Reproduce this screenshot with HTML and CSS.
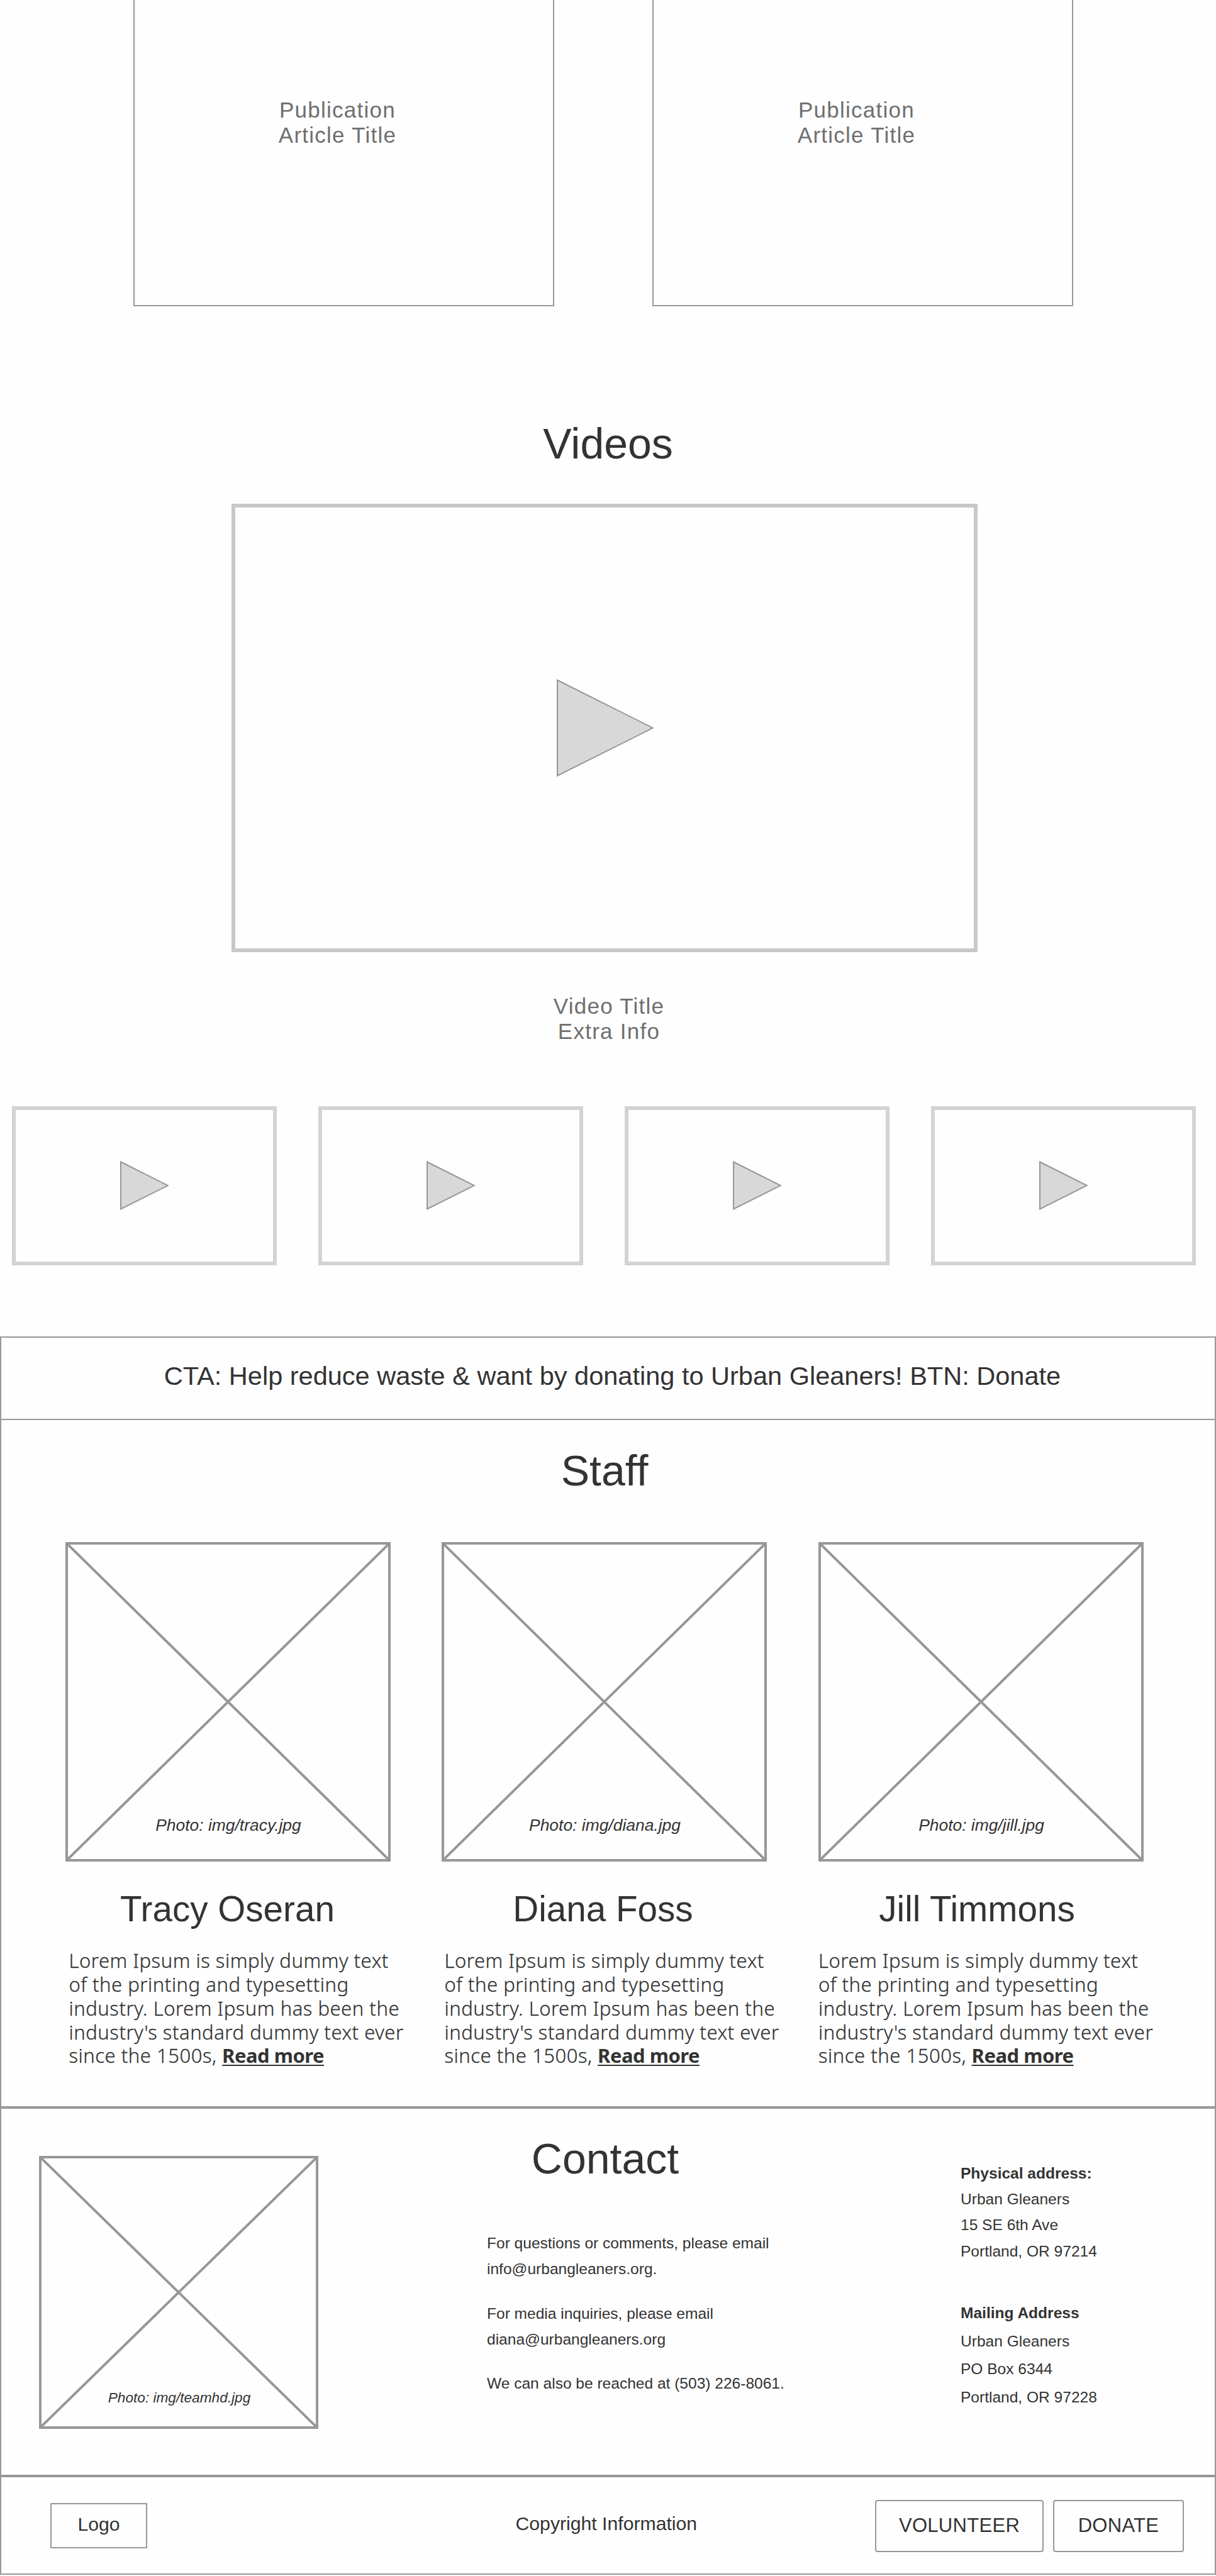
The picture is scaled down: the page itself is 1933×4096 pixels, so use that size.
FILE: index.html
```html
<!DOCTYPE html>
<html lang="en">
<head>
<meta charset="utf-8">
<title>Urban Gleaners</title>
<link rel="stylesheet" href="styles.css">
</head>
<body>
<section class="articles">
  <article class="article">Publication<br>Article Title</article>
  <article class="article">Publication<br>Article Title</article>
</section>

<section class="videos">
  <h2 class="heading">Videos</h2>
  <div class="player"><svg class="play" viewBox="0 0 155 155"><path d="M2 1.500 L154 77.500 L2 153.500 Z"/></svg></div>
  <p class="video-caption">Video Title<br>Extra Info</p>
  <div class="thumbs">
    <div class="thumb"><svg class="play-small" viewBox="0 0 78 78"><path d="M1 1.500 L76 39 L1 76.500 Z"/></svg></div>
    <div class="thumb"><svg class="play-small" viewBox="0 0 78 78"><path d="M1 1.500 L76 39 L1 76.500 Z"/></svg></div>
    <div class="thumb"><svg class="play-small" viewBox="0 0 78 78"><path d="M1 1.500 L76 39 L1 76.500 Z"/></svg></div>
    <div class="thumb"><svg class="play-small" viewBox="0 0 78 78"><path d="M1 1.500 L76 39 L1 76.500 Z"/></svg></div>
  </div>
</section>

<main class="frame">
  <section class="cta">CTA: Help reduce waste &amp; want by donating to Urban Gleaners! BTN: Donate</section>

  <section class="staff">
    <h2 class="heading staff-heading">Staff</h2>
    <div class="people">
      <article class="person tracy">
        <div class="photo"><svg class="cross" viewBox="0 0 100 100" preserveAspectRatio="none"><path d="M0 0 L100 100 M100 0 L0 100"/></svg><span class="photo-label">Photo: img/tracy.jpg</span></div>
        <h3 class="name">Tracy Oseran</h3>
        <p class="bio">Lorem Ipsum is simply dummy text<br>of the printing and typesetting<br>industry. Lorem Ipsum has been the<br>industry's standard dummy text ever<br>since the 1500s, <a class="more">Read more</a></p>
      </article>
      <article class="person diana">
        <div class="photo"><svg class="cross" viewBox="0 0 100 100" preserveAspectRatio="none"><path d="M0 0 L100 100 M100 0 L0 100"/></svg><span class="photo-label">Photo: img/diana.jpg</span></div>
        <h3 class="name">Diana Foss</h3>
        <p class="bio">Lorem Ipsum is simply dummy text<br>of the printing and typesetting<br>industry. Lorem Ipsum has been the<br>industry's standard dummy text ever<br>since the 1500s, <a class="more">Read more</a></p>
      </article>
      <article class="person jill">
        <div class="photo"><svg class="cross" viewBox="0 0 100 100" preserveAspectRatio="none"><path d="M0 0 L100 100 M100 0 L0 100"/></svg><span class="photo-label">Photo: img/jill.jpg</span></div>
        <h3 class="name">Jill Timmons</h3>
        <p class="bio">Lorem Ipsum is simply dummy text<br>of the printing and typesetting<br>industry. Lorem Ipsum has been the<br>industry's standard dummy text ever<br>since the 1500s, <a class="more">Read more</a></p>
      </article>
    </div>
  </section>

  <section class="contact">
    <div class="photo team"><svg class="cross" viewBox="0 0 100 100" preserveAspectRatio="none"><path d="M0 0 L100 100 M100 0 L0 100"/></svg><span class="photo-label">Photo: img/teamhd.jpg</span></div>
    <div class="contact-text">
      <h2 class="heading">Contact</h2>
      <p>For questions or comments, please email<br>info@urbangleaners.org.</p>
      <p>For media inquiries, please email<br>diana@urbangleaners.org</p>
      <p>We can also be reached at (503) 226-8061.</p>
    </div>
    <div class="addresses">
      <address class="physical"><b>Physical address:</b><br>Urban Gleaners<br>15 SE 6th Ave<br>Portland, OR 97214</address>
      <address class="mailing"><b>Mailing Address</b><br>Urban Gleaners<br>PO Box 6344<br>Portland, OR 97228</address>
    </div>
  </section>

  <footer class="footer">
    <div class="logo">Logo</div>
    <div class="copyright">Copyright Information</div>
    <div class="actions">
      <a class="button volunteer">VOLUNTEER</a>
      <a class="button donate">DONATE</a>
    </div>
  </footer>
</main>
</body>
</html>
```
FILE: styles.css
```css
* {
  box-sizing: border-box;
}

body {
  margin: 0;
  height: 4096px;
  overflow: hidden;
  background: #fefefe;
  color: #333;
  font-family: "Liberation Sans", Arial, sans-serif;
}

h2, h3, p {
  margin: 0;
  font-weight: normal;
}

.heading {
  font-size: 68px;
  line-height: 78px;
  text-align: center;
}

/* Articles */
.articles {
  display: grid;
  grid-template-columns: 669px 669px;
  gap: 156px;
  height: 487px;
  padding-left: 212px;
}

.article {
  border: 2px solid #979797;
  border-top: 0;
  padding: 155px 20px 0 0;
  text-align: center;
}

.article,
.video-caption {
  color: #6f6f6f;
  font-size: 35px;
  line-height: 39.600px;
  letter-spacing: 1.250px;
}

/* Videos */
.videos {
  height: 1638px;
  padding-top: 179px;
}

.player {
  display: flex;
  align-items: center;
  justify-content: center;
  width: 1186px;
  height: 713px;
  margin: 57px 0 0 368px;
  border: 6px solid #c8c8c8;
}

.play,
.play-small {
  fill: #d8d8d8;
  stroke: #979797;
  stroke-width: 2;
}

.play {
  width: 155px;
  height: 155px;
}

.play-small {
  width: 78px;
  height: 78px;
}

.video-caption {
  margin-top: 66px;
  padding-left: 3px;
  text-align: center;
}

.thumbs {
  display: grid;
  grid-template-columns: repeat(4, 421px);
  gap: 66px;
  margin: 99.800px 0 0 19px;
}

.thumb {
  display: flex;
  align-items: center;
  justify-content: center;
  height: 253px;
  border: 6px solid #d3d3d3;
}

/* Framed lower page */
.frame {
  height: 1969px;
  border: 2px solid #979797;
}

.cta {
  height: 131px;
  padding: 37.300px 0 0 14px;
  border-bottom: 2px solid #979797;
  font-size: 41.530px;
  line-height: 48px;
  text-align: center;
}

.staff {
  height: 1095px;
  padding-top: 40.600px;
  border-bottom: 4px solid #979797;
}

.staff-heading {
  padding-right: 11px;
}

.people {
  display: grid;
  grid-template-columns: repeat(3, 517px);
  gap: 81.500px;
  margin: 75.400px 0 0 101.500px;
}

.photo {
  position: relative;
  display: flex;
  align-items: flex-end;
  justify-content: center;
  height: 508px;
  border: 4px solid #979797;
}

.cross {
  position: absolute;
  inset: 0;
  width: 100%;
  height: 100%;
  fill: none;
  stroke: #979797;
  stroke-width: 4px;
}

.cross path {
  vector-effect: non-scaling-stroke;
}

.photo-label {
  position: relative;
  padding: 0 0 39px 2px;
  font-size: 26.430px;
  font-style: italic;
  line-height: 30px;
}

.name {
  margin-top: 44.300px;
  padding-right: 1px;
  font-size: 56.630px;
  line-height: 64px;
  text-align: center;
}

.diana .name {
  padding-right: 4px;
}

.jill .name {
  padding-right: 12px;
}

.bio {
  margin: 31px 0 0 6px;
  font-family: "Noto Sans", "Open Sans", sans-serif;
  font-size: 31px;
  font-weight: 300;
  line-height: 37.750px;
  letter-spacing: 0.520px;
  white-space: nowrap;
  -webkit-text-stroke: 0.300px #333;
}

.diana .bio {
  margin-left: 4.500px;
}

.jill .bio {
  margin-left: 0.500px;
}

.more {
  font-weight: 700;
  letter-spacing: -0.500px;
  text-decoration: underline;
  text-decoration-thickness: 2px;
  text-underline-offset: 3px;
  text-decoration-skip-ink: none;
  -webkit-text-stroke: 0;
}

/* Contact */
.contact {
  display: grid;
  grid-template-columns: 444px 500px 380px;
  column-gap: 268px;
  height: 586px;
  padding-left: 60px;
  border-bottom: 4px solid #979797;
  font-size: 24.540px;
  line-height: 41.300px;
  white-space: nowrap;
}

.team {
  height: 434px;
  margin-top: 75px;
}

.team .photo-label {
  padding: 0 0 31px 2px;
  font-size: 22.650px;
}

.contact-text {
  padding-top: 40.400px;
}

.contact-text .heading {
  width: 376px;
  margin-bottom: 74.700px;
}

.contact-text p {
  margin-bottom: 29px;
}

.addresses {
  padding-top: 81.500px;
  margin-left: -15px;
}

address {
  font-style: normal;
}

.physical {
  line-height: 41.400px;
}

.mailing {
  margin-top: 56px;
  line-height: 44.500px;
}

/* Footer */
.footer {
  display: flex;
  align-items: flex-start;
  height: 152px;
  padding: 36px 49px 0 78px;
  font-size: 30.200px;
  line-height: 34px;
}

.logo {
  width: 154px;
  height: 72px;
  margin-top: 5px;
  padding-top: 15px;
  border: 2px solid #979797;
  text-align: center;
}

.copyright {
  margin: 21px auto 0 585.500px;
}

.actions {
  display: flex;
  gap: 15px;
}

.button {
  height: 83px;
  padding-top: 22px;
  border: 2px solid #979797;
  border-radius: 4px;
  font-size: 31px;
  letter-spacing: 0.300px;
  text-align: center;
}

.volunteer {
  width: 268px;
}

.donate {
  width: 208px;
}
```
